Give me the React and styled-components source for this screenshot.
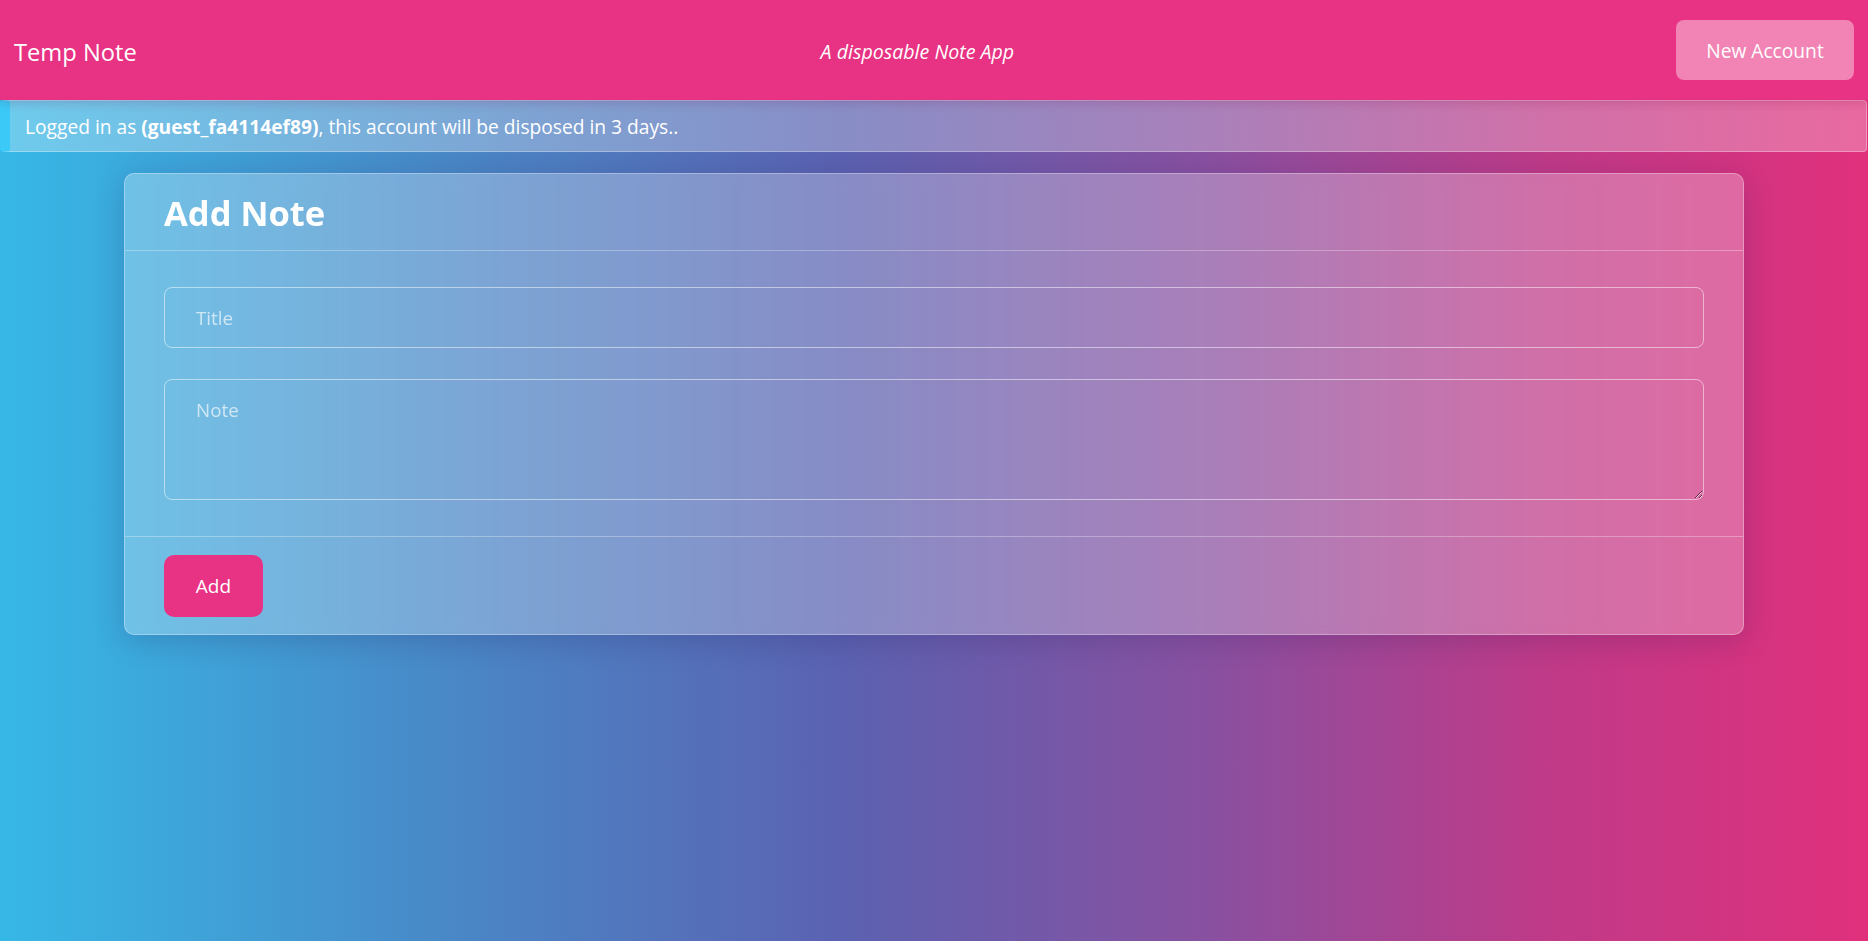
import React from "react";
import styled, { createGlobalStyle } from "styled-components";

const GlobalStyle = createGlobalStyle`
  * { box-sizing: border-box; }
  html, body { margin: 0; padding: 0; }
  body {
    font-family: "Open Sans", "Noto Sans", sans-serif;
    color: #ffffff;
    min-height: 100vh;
    background: linear-gradient(to right, #36b8e6 0%, #4a86c6 25%, #5b62b1 45%, #8a50a0 65%, #c03a88 83%, #e0307c 100%);
    background-attachment: fixed;
  }
`;

const Page = styled.div`
  min-height: 100vh;
  display: flex;
  flex-direction: column;
`;

const NavBar = styled.header`
  height: 100px;
  background: #e83283;
  display: flex;
  align-items: center;
  justify-content: space-between;
  padding: 0 14px;
  box-shadow: 0 3px 10px rgba(120, 0, 60, 0.18);
  position: relative;
  z-index: 1;
`;

const Brand = styled.div`
  font-size: 23.7px;
  color: #ffffff;
  padding-top: 3px;
`;

const Tagline = styled.div`
  font-size: 19.6px;
  font-style: italic;
  color: #ffffff;
  padding-left: 22px;
  padding-top: 3px;
`;

const NavButton = styled.button`
  width: 178px;
  height: 60px;
  border: none;
  border-radius: 8px;
  background: rgba(255, 255, 255, 0.4);
  color: #ffffff;
  font-family: inherit;
  font-size: 19.2px;
  padding-top: 2px;
  cursor: pointer;
`;

const Alert = styled.div`
  height: 52px;
  margin-right: 1px;
  display: flex;
  align-items: center;
  padding-left: 15px;
  background: rgba(255, 255, 255, 0.28);
  border: 1px solid rgba(255, 255, 255, 0.3);
  border-left: 10px solid #3bc9f8;
  border-radius: 4px;
  font-size: 19.2px;
  color: #ffffff;

  b { font-weight: 700; }
`;

const Main = styled.main`
  padding: 21px 124px 40px;
`;

const Card = styled.section`
  background: rgba(255, 255, 255, 0.27);
  border: 1px solid rgba(255, 255, 255, 0.3);
  border-radius: 10px;
  box-shadow: 0 6px 30px rgba(30, 20, 80, 0.2);
  backdrop-filter: blur(6px);
`;

const CardHeader = styled.div`
  height: 77px;
  display: flex;
  align-items: center;
  padding: 0 39px;
  border-bottom: 1px solid rgba(255, 255, 255, 0.3);
`;

const CardTitle = styled.h2`
  margin: 0;
  font-size: 34.5px;
  font-weight: 700;
  color: #ffffff;
`;

const CardBody = styled.div`
  display: flex;
  flex-direction: column;
  gap: 31px;
  padding: 36px 39px 36px;
  border-bottom: 1px solid rgba(255, 255, 255, 0.3);
`;

const fieldStyles = `
  width: 100%;
  background: transparent;
  border: 1px solid rgba(255, 255, 255, 0.5);
  border-radius: 8px;
  color: #ffffff;
  font-family: "Open Sans", "Noto Sans", sans-serif;
  font-size: 18.8px;
  outline: none;
  &::placeholder { color: rgba(255, 255, 255, 0.65); }
`;

const TextInput = styled.input`
  ${fieldStyles}
  height: 61px;
  padding: 0 31px;
`;

const TextArea = styled.textarea`
  ${fieldStyles}
  height: 121px;
  padding: 16px 31px;
  line-height: 1.5;
  display: block;
`;

const CardFooter = styled.div`
  padding: 18px 39px 17px;
`;

const AddButton = styled.button`
  width: 99px;
  height: 62px;
  border: none;
  border-radius: 10px;
  background: #e83283;
  color: #ffffff;
  font-family: inherit;
  font-size: 19px;
  cursor: pointer;
`;

export default function App() {
  return (
    <>
      <GlobalStyle />
      <Page>
        <NavBar>
          <Brand>Temp Note</Brand>
          <Tagline>A disposable Note App</Tagline>
          <NavButton>New Account</NavButton>
        </NavBar>
        <Alert>
          <span>
            Logged in as <b>(guest_fa4114ef89)</b>, this account will be disposed in 3 days..
          </span>
        </Alert>
        <Main>
          <Card>
            <CardHeader>
              <CardTitle>Add Note</CardTitle>
            </CardHeader>
            <CardBody>
              <TextInput placeholder="Title" />
              <TextArea placeholder="Note" />
            </CardBody>
            <CardFooter>
              <AddButton>Add</AddButton>
            </CardFooter>
          </Card>
        </Main>
      </Page>
    </>
  );
}
